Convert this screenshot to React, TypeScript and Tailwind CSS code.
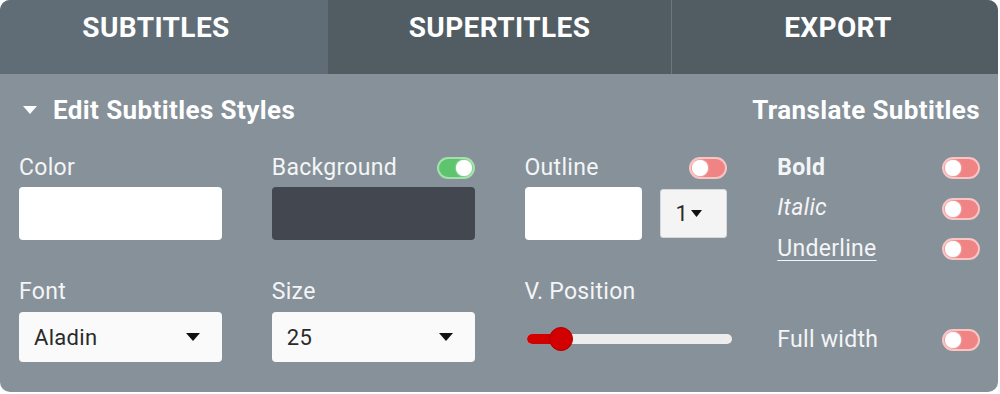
import React from "react";

const Toggle = ({ on = false }: { on?: boolean }) => (
  <div
    className={
      on
        ? "w-[38px] h-[22px] shrink-0 rounded-full border-2 border-[#a4e0ad] bg-[#5ec46e] flex items-center justify-end px-[1px]"
        : "w-[38px] h-[22px] shrink-0 rounded-full border-2 border-[#f8c4c4] bg-[#f08484] flex items-center justify-start px-[1px]"
    }
  >
    <div className="w-[16px] h-[16px] rounded-full bg-white shadow-[0_0_2px_rgba(255,255,255,0.9)]" />
  </div>
);

const Caret = () => (
  <svg width="14" height="8" viewBox="0 0 14 8">
    <path d="M0 0 L14 0 L7 8 Z" fill="#111" />
  </svg>
);

const Select = ({ value }: { value: string }) => (
  <div className="h-[50px] w-full rounded-[4px] bg-[#fafafa] flex items-center justify-between pl-[15px] pr-[22px] text-[22px] tracking-[0.3px] text-[#2a2a2a]">
    <span>{value}</span>
    <Caret />
  </div>
);

const Label = ({ children, toggle }: { children: React.ReactNode; toggle?: React.ReactNode }) => (
  <div className="h-[28px] flex items-center justify-between">
    <span className="text-[23px] tracking-[0.3px] text-[#f4f5f6]">{children}</span>
    {toggle}
  </div>
);

export default function App() {
  return (
    <div className="w-[1000px] h-[394px] bg-white" style={{ fontFamily: "Roboto, 'Open Sans', sans-serif" }}>
      <div className="w-[998px] h-[392px] rounded-[10px] overflow-hidden bg-[#86919a] flex flex-col">
        {/* tabs */}
        <div className="h-[74px] flex text-white font-bold text-[28px] tracking-[0.4px]">
          <div className="w-[328px] bg-[#606d76] flex items-center justify-center pr-[16px] pb-[18px]">SUBTITLES</div>
          <div className="w-[343px] bg-[#515c63] flex items-center justify-center pb-[18px]">SUPERTITLES</div>
          <div className="w-[1px] bg-[#6c777e]" />
          <div className="flex-1 bg-[#515c63] flex items-center justify-center pl-[6px] pb-[18px]">EXPORT</div>
        </div>

        <div className="pl-[19px] pr-[18px]">
          {/* heading */}
          <div className="h-[34px] mt-[19px] flex items-center justify-between text-white font-bold text-[26px] tracking-[0.4px]">
            <div className="flex items-center">
              <svg width="14" height="8" viewBox="0 0 14 8" className="ml-[4px] mr-[16px]">
                <path d="M0 0 L14 0 L7 8 Z" fill="#fff" />
              </svg>
              <span>Edit Subtitles Styles</span>
            </div>
            <span>Translate Subtitles</span>
          </div>

          {/* controls */}
          <div className="mt-[27px] grid grid-cols-4 gap-x-[50px] gap-y-[15px]">
            <div className="flex flex-col">
              <Label>Color</Label>
              <div className="mt-[5px] h-[53px] rounded-[4px] bg-white" />
            </div>
            <div className="flex flex-col">
              <Label toggle={<Toggle on />}>Background</Label>
              <div className="mt-[5px] h-[53px] rounded-[4px] bg-[#434850]" />
            </div>
            <div className="flex flex-col">
              <Label toggle={<Toggle />}>Outline</Label>
              <div className="mt-[5px] flex items-center gap-[18px]">
                <div className="h-[53px] w-[117px] rounded-[4px] bg-white" />
                <div className="h-[49px] w-[67px] rounded-[3px] bg-[#f4f4f4] border border-[#d8d8d8] flex items-center pl-[15px] gap-[3px] text-[22px] text-[#2a2a2a]">
                  <span>1</span>
                  <svg width="11" height="7" viewBox="0 0 11 7">
                    <path d="M0 0 L11 0 L5.5 7 Z" fill="#111" />
                  </svg>
                </div>
              </div>
            </div>
            <div className="flex flex-col gap-[12.5px] text-[23px] tracking-[0.3px] text-[#f4f5f6]">
              <div className="h-[28px] flex items-center justify-between">
                <span className="font-bold">Bold</span>
                <Toggle />
              </div>
              <div className="h-[28px] flex items-center justify-between">
                <span className="italic">Italic</span>
                <Toggle />
              </div>
              <div className="h-[28px] flex items-center justify-between">
                <span className="underline underline-offset-[4px] decoration-1">Underline</span>
                <Toggle />
              </div>
            </div>

            <div className="flex flex-col">
              <Label>Font</Label>
              <div className="mt-[6px]">
                <Select value="Aladin" />
              </div>
            </div>
            <div className="flex flex-col">
              <Label>Size</Label>
              <div className="mt-[6px]">
                <Select value="25" />
              </div>
            </div>
            <div className="flex flex-col">
              <Label>V. Position</Label>
              <div className="mt-[8px] h-[50px] flex items-center pl-[2px]">
                <div className="relative w-[205px] shrink-0 h-[10px] rounded-full bg-[#ededed]">
                  <div className="absolute left-0 top-0 h-[10px] w-[34px] rounded-full bg-[#d20000]" />
                  <div className="absolute left-[22px] top-[-7px] w-[24px] h-[24px] rounded-full bg-[#d20000] border border-[#b00000]" />
                </div>
              </div>
            </div>
            <div className="flex flex-col">
              <div className="h-[28px]" />
              <div className="mt-[9px] h-[50px] flex items-center justify-between text-[23px] tracking-[0.3px] text-[#f4f5f6]">
                <span>Full width</span>
                <Toggle />
              </div>
            </div>
          </div>
        </div>
      </div>
    </div>
  );
}
